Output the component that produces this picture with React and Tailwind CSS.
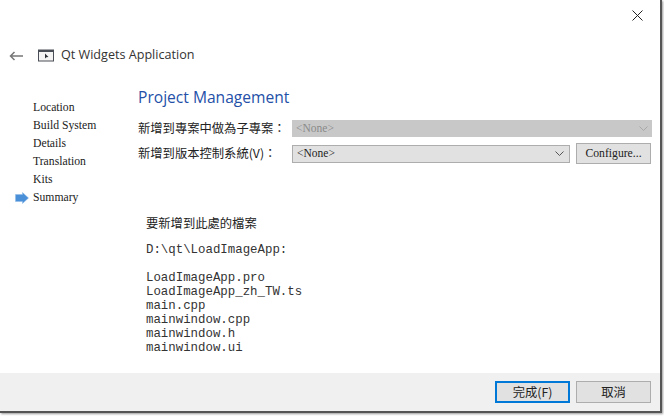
import React from "react";

const cjk = "font-['Noto_Sans_CJK_TC',sans-serif]";
const serif = "font-['Liberation_Serif',serif]";

const steps = ["Location", "Build System", "Details", "Translation", "Kits", "Summary"];
const files = [
  "LoadImageApp.pro",
  "LoadImageApp_zh_TW.ts",
  "main.cpp",
  "mainwindow.cpp",
  "mainwindow.h",
  "mainwindow.ui",
];

const Chevron = ({ color }) => (
  <svg width="9" height="6" viewBox="0 0 9 6" fill="none" stroke={color} strokeWidth="1">
    <path d="M0.5 0.5 L4.5 4.5 L8.5 0.5" />
  </svg>
);

const App = () => {
  return (
    <div className="w-[664px] h-[416px] bg-white overflow-hidden">
      <div className="w-[662px] h-[413px] flex flex-col bg-white border-r-2 border-b-2 border-[#555555] shadow-[1px_1px_2px_rgba(0,0,0,0.4)]">
        {/* Close */}
        <div className="h-[31px] flex justify-end items-start pt-[10px] pr-[17px] shrink-0">
          <svg width="11" height="11" viewBox="0 0 11 11" stroke="#222222" strokeWidth="1" fill="none">
            <path d="M0.5 0.5 L10.5 10.5 M10.5 0.5 L0.5 10.5" />
          </svg>
        </div>

        {/* Title */}
        <div className="h-[48px] flex items-center pl-[9px] pt-[1px] shrink-0">
          <svg width="14" height="10" viewBox="0 0 14 10" fill="none" stroke="#777777" strokeWidth="1.5">
            <path d="M14 5 H1.5 M5.5 1 L1.5 5 L5.5 9" />
          </svg>
          <svg className="ml-[15px]" width="16" height="13" viewBox="0 0 16 13">
            <rect x="0.5" y="1" width="15" height="11" fill="#f4f4f4" stroke="#4a4f57" />
            <rect x="0.5" y="1" width="15" height="2" fill="#4a4f57" />
            <path d="M7 4.5 L7 9.5 L8.4 8.2 L10.5 8 Z" fill="#2d3138" />
          </svg>
          <span className="ml-[7px] font-['Open_Sans',sans-serif] text-[12.6px] text-[#333333]">Qt Widgets Application</span>
        </div>

        {/* Body */}
        <div className="flex-1 flex min-h-0">
          <div className={`w-[138px] shrink-0 pt-[20px] ${serif} text-[11.7px] text-[#222222]`}>
            {steps.map((step) => (
              <div key={step} className="h-[18px] flex items-center relative pl-[33px]">
                {step === "Summary" && (
                  <svg className="absolute left-[15px] top-[3px]" width="14" height="12" viewBox="0 0 14 12">
                    <path d="M0.5 2.5 H7.5 V0.5 L13.5 6 L7.5 11.5 V9.5 H0.5 Z" fill="#4a90d9" stroke="#8fb8e4" strokeWidth="0.5" />
                  </svg>
                )}
                <span>{step}</span>
              </div>
            ))}
          </div>

          <div className="flex-1 min-w-0">
            <h1 className="h-[30px] mt-[3px] font-['Open_Sans',sans-serif] text-[15.6px] leading-[30px] text-[#2450a8]">Project Management</h1>

            <div className="mt-[8px] flex items-center h-[17px]">
              <span className={`w-[154px] shrink-0 ${cjk} text-[12.3px] text-[#222222] whitespace-nowrap`}>新增到專案中做為子專案：</span>
              <div className={`w-[360px] h-[17px] bg-[#c8c8c8] flex items-center justify-between pl-[4px] pr-[4px] ${serif} text-[11.5px] text-[#8a8a8a]`}>
                <span>&lt;None&gt;</span>
                <Chevron color="#a8a8a8" />
              </div>
            </div>

            <div className="mt-[6px] flex items-center h-[21px]">
              <span className={`w-[154px] shrink-0 ${cjk} text-[12.3px] text-[#222222] whitespace-nowrap`}>
                新增到版本控制系統(V)：
              </span>
              <div className={`w-[278px] h-[18px] bg-[#e1e1e1] border border-[#adadad] flex items-center justify-between pl-[4px] pr-[5px] ${serif} text-[11.5px] text-[#222222]`}>
                <span>&lt;None&gt;</span>
                <Chevron color="#555555" />
              </div>
              <button className={`ml-[6px] w-[75px] h-[21px] bg-[#e1e1e1] border border-[#adadad] ${serif} text-[11.7px] text-[#222222]`}>
                Configure...
              </button>
            </div>

            <div className="mt-[50px] ml-[8px]">
              <div className={`${cjk} text-[12.3px] leading-[18px] text-[#222222]`}>要新增到此處的檔案</div>
              <pre className="mt-[11px] font-['Liberation_Mono',monospace] text-[12.4px] leading-[14px] text-[#333333]">
                <div>D:\qt\LoadImageApp:</div>
                <div className="h-[14px]" />
                {files.map((file) => (
                  <div key={file}>{file}</div>
                ))}
              </pre>
            </div>
          </div>
        </div>

        {/* Footer */}
        <div className="h-[38px] shrink-0 bg-[#f0f0f0] flex items-start justify-end gap-[6px] pt-[8px] pr-[9px]">
          <button className={`w-[75px] h-[22px] bg-[#e1e1e1] border-2 border-[#0078d7] ${cjk} text-[12.3px] text-[#222222]`}>完成(F)</button>
          <button className={`w-[75px] h-[22px] bg-[#e1e1e1] border border-[#adadad] ${cjk} text-[12.3px] text-[#222222]`}>取消</button>
        </div>
      </div>
    </div>
  );
};

export default App;
